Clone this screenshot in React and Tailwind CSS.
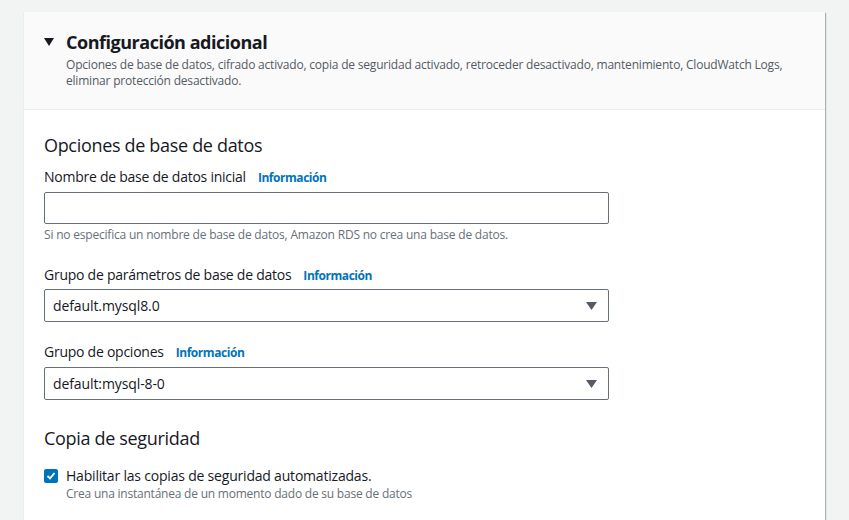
const Info = () => (
  <span className="ml-[12px] text-[12px] font-bold tracking-[-0.45px] text-[#0073bb]">Información</span>
);

const Caret = () => (
  <svg width="11" height="8" viewBox="0 0 11 8" className="shrink-0">
    <path d="M0 0 H11 L5.5 8 Z" fill="#545b64" />
  </svg>
);

const SelectBox = ({ value }) => (
  <div className="w-[565px] h-[33px] border border-[#687078] rounded-[2px] flex items-center justify-between pl-[8px] pr-[11px] text-[14px] tracking-[-0.1px] text-[#16191f]">
    <span>{value}</span>
    <Caret />
  </div>
);

const Label = ({ text, className }) => (
  <div className={"flex items-baseline text-[14px] leading-[20px] tracking-[-0.25px] text-[#16191f] " + className}>
    <span>{text}</span>
    <Info />
  </div>
);

export default function App() {
  return (
    <div className="min-h-[520px] bg-[#f2f3f3] pt-[12px] pl-[23px] overflow-hidden" style={{ fontFamily: '"Open Sans", "Noto Sans", sans-serif' }}>
      <div className="w-[802px] bg-white border-l border-[#eaeded] shadow-[1px_1px_1px_0_rgba(0,28,36,0.3)] h-[520px]">
        <div className="bg-[#fafafa] border-b border-[#eaeded] h-[98px] pl-[20px] pr-[20px] pt-[18px]">
          <div className="flex items-center">
            <svg width="10" height="8" viewBox="0 0 10 8" className="mr-[12px]">
              <path d="M0 0 H10 L5 8 Z" fill="#16191f" />
            </svg>
            <h2 className="text-[18px] font-bold tracking-[-0.48px] text-[#16191f] leading-[24px]">Configuración adicional</h2>
          </div>
          <p className="ml-[22px] mt-[3px] w-[730px] text-[12px] leading-[16px] tracking-[-0.2px] text-[#545b64]">
            Opciones de base de datos, cifrado activado, copia de seguridad activado, retroceder desactivado, mantenimiento, CloudWatch Logs, eliminar protección desactivado.
          </p>
        </div>
        <div className="pl-[20px] pt-[23px]">
          <h3 className="text-[18px] leading-[24px] tracking-[-0.32px] text-[#16191f]">Opciones de base de datos</h3>
          <Label text="Nombre de base de datos inicial" className="mt-[10px]" />
          <div className="mt-[4px] w-[565px] h-[32px] border border-[#687078] rounded-[2px]"></div>
          <p className="mt-[3px] text-[12px] leading-[16px] tracking-[-0.2px] text-[#687078]">
            Si no especifica un nombre de base de datos, Amazon RDS no crea una base de datos.
          </p>
          <Label text="Grupo de parámetros de base de datos" className="mt-[22px]" />
          <div className="mt-[3px]">
            <SelectBox value="default.mysql8.0" />
          </div>
          <Label text="Grupo de opciones" className="mt-[20px]" />
          <div className="mt-[4px]">
            <SelectBox value="default:mysql-8-0" />
          </div>
          <h3 className="mt-[26px] text-[18px] leading-[24px] tracking-[-0.32px] text-[#16191f]">Copia de seguridad</h3>
          <div className="mt-[16px] flex items-start">
            <div className="mt-[3px] w-[14px] h-[14px] rounded-[2px] bg-[#0073bb] flex items-center justify-center">
              <svg width="10" height="10" viewBox="0 0 10 10">
                <path d="M1.5 5 L4 7.5 L8.5 2" stroke="white" strokeWidth="1.8" fill="none" />
              </svg>
            </div>
            <div className="ml-[8px]">
              <div className="text-[14px] leading-[20px] tracking-[-0.2px] text-[#16191f]">Habilitar las copias de seguridad automatizadas.</div>
              <div className="text-[12px] leading-[16px] tracking-[-0.22px] text-[#687078]">Crea una instantánea de un momento dado de su base de datos</div>
            </div>
          </div>
        </div>
      </div>
    </div>
  );
}
